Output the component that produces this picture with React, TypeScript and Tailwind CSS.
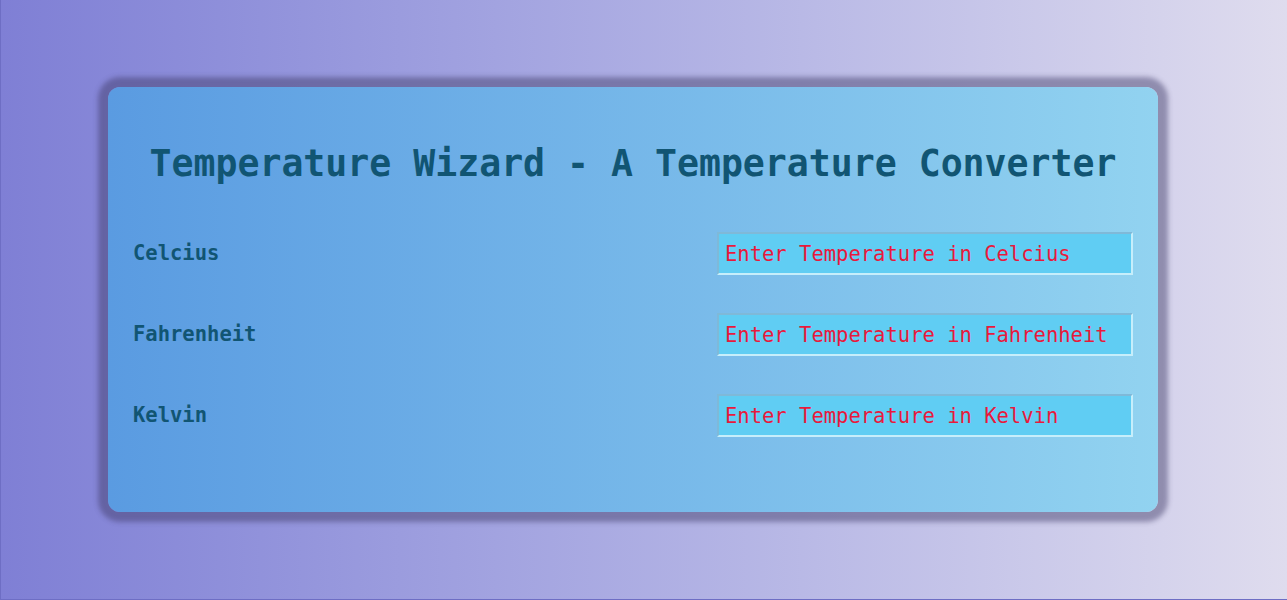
import React from "react";

const rows = [
  { label: "Celcius", ph: "Enter Temperature in Celcius" },
  { label: "Fahrenheit", ph: "Enter Temperature in Fahrenheit" },
  { label: "Kelvin", ph: "Enter Temperature in Kelvin" },
];

export default function App() {
  return (
    <div
      className="h-[600px] w-full overflow-hidden border-l border-b border-[#6e6ec4] bg-gradient-to-r from-[#7f7fd5] to-[#dfdcee] pt-[87px] pl-[107px]"
      style={{ fontFamily: '"DejaVu Sans Mono", monospace' }}
    >
      <div className="flex h-[425px] w-[1050px] flex-col rounded-[12px] bg-gradient-to-r from-[#5a9be1] to-[#92d3f0] px-[25px] shadow-[0_0_5px_10px_rgba(60,55,100,0.45)]">
        <h1 className="mt-[56px] text-center text-[36.5px] font-bold leading-[42px] text-[#115573]">
          Temperature Wizard - A Temperature Converter
        </h1>
        <div className="mt-[47px] flex flex-col gap-[38px]">
          {rows.map((r) => (
            <div key={r.label} className="flex items-center justify-between">
              <span className="text-[20.5px] font-bold text-[#115573]">{r.label}</span>
              <input
                placeholder={r.ph}
                className="h-[43px] w-[416px] border-2 border-t-[#7fb9d8] border-l-[#7fb9d8] border-b-[#c6eefb] border-r-[#c6eefb] bg-[#60cdf3] px-[6px] text-[20.5px] text-[#e8193c] outline-none placeholder:text-[#e8193c]"
                style={{ fontFamily: '"DejaVu Sans Mono", monospace' }}
              />
            </div>
          ))}
        </div>
      </div>
    </div>
  );
}
